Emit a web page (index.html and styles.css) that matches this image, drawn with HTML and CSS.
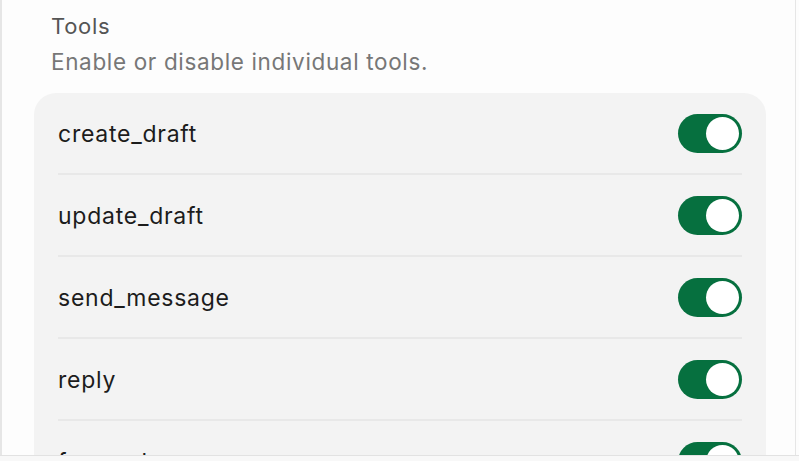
FILE: index.html
```html
<!DOCTYPE html>
<html>
<head>
<meta charset="utf-8">
<link rel="stylesheet" href="styles.css">
</head>
<body>
<div class="page">
  <div class="section">
    <div class="title">Tools</div>
    <div class="desc">Enable or disable individual tools.</div>
    <div class="card">
      <div class="row"><span class="name">create_draft</span><span class="toggle"><span class="knob"></span></span></div>
      <div class="row"><span class="name">update_draft</span><span class="toggle"><span class="knob"></span></span></div>
      <div class="row"><span class="name">send_message</span><span class="toggle"><span class="knob"></span></span></div>
      <div class="row"><span class="name">reply</span><span class="toggle"><span class="knob"></span></span></div>
      <div class="row"><span class="name">forward</span><span class="toggle"><span class="knob"></span></span></div>
    </div>
  </div>
</div>
<div class="bottombar"></div>
</body>
</html>
```
FILE: styles.css
```css
html, body {
  margin: 0;
  padding: 0;
  background: #fdfdfd;
  overflow: hidden;
  height: 100%;
}
body {
  font-family: Inter, "Noto Sans", sans-serif;
}
.page {
  box-sizing: border-box;
  width: 796px;
  height: 100%;
  border-left: 2px solid #e6e6e6;
  border-right: 1px solid #e6e6e6;
  background: #fdfdfd;
}
.section {
  padding: 12px 0 0 32px;
  width: 732px;
}
.title {
  margin-left: 17px;
  font-size: 22px;
  letter-spacing: 0.7px;
  line-height: 28px;
  color: #555;
}
.desc {
  margin-left: 17px;
  margin-top: 8px;
  font-size: 22.5px;
  letter-spacing: 0.65px;
  line-height: 28px;
  color: #777;
}
.card {
  margin-top: 17px;
  background: #f3f3f3;
  border-radius: 22px;
  padding: 0 24px;
}
.row {
  height: 80px;
  display: flex;
  align-items: center;
  justify-content: space-between;
  border-bottom: 2px solid #e8e8e8;
}
.name {
  font-size: 23px;
  letter-spacing: 0.75px;
  color: #1c1c1c;
  padding-top: 2px;
}
.toggle {
  box-sizing: border-box;
  width: 64px;
  height: 39px;
  border-radius: 20px;
  background: #06703f;
  padding: 3px;
  display: flex;
  justify-content: flex-end;
  align-items: center;
}
.knob {
  width: 33px;
  height: 33px;
  border-radius: 50%;
  background: #fff;
}
.bottombar {
  position: fixed;
  left: 0;
  right: 0;
  top: 455px;
  height: 10px;
  background: #f8f8f8;
  border-top: 1px solid #e2e2e2;
}
```
